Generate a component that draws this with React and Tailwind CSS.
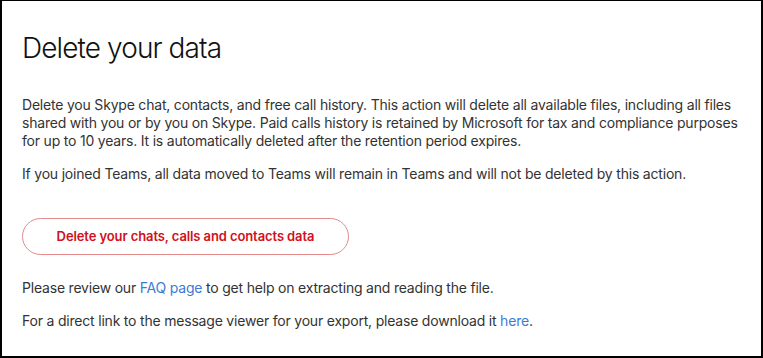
export default function App() {
  return (
    <div
      className="w-[763px] h-[358px] bg-white border-l-2 border-r-2 border-b-2 border-t border-black pl-[20px] pr-[6px] overflow-hidden"
      style={{ fontFamily: 'Inter, "Noto Sans", sans-serif' }}
    >
      <h1 className="mt-[30px] text-[28px] leading-[34px] font-light text-[#111] tracking-[-0.9px]">
        Delete your data
      </h1>
      <p className="mt-[31px] text-[14px] leading-[18px] text-[#333] tracking-[-0.2px] whitespace-nowrap">
        Delete you Skype chat, contacts, and free call history. This action will delete all available files, including all files
        <br />
        shared with you or by you on Skype. Paid calls history is retained by Microsoft for tax and compliance purposes
        <br />
        for up to 10 years. It is automatically deleted after the retention period expires.
      </p>
      <p className="mt-[15px] text-[14px] leading-[18px] text-[#333] tracking-[-0.2px]">
        If you joined Teams, all data moved to Teams will remain in Teams and will not be deleted by this action.
      </p>
      <button className="mt-[35px] w-[327px] h-[37px] rounded-full border border-[#e58a8a] bg-white text-[13px] font-semibold tracking-[-0.1px] text-[#d1101c] flex items-center justify-center">
        Delete your chats, calls and contacts data
      </button>
      <p className="mt-[24px] text-[14px] leading-[18px] text-[#333] tracking-[-0.2px]">
        Please review our <span className="text-[#3b7bd6]">FAQ page</span> to get help on extracting and reading the file.
      </p>
      <p className="mt-[15px] text-[14px] leading-[18px] text-[#333] tracking-[-0.2px]">
        For a direct link to the message viewer for your export, please download it <span className="text-[#3b7bd6]">here</span>.
      </p>
    </div>
  );
}
